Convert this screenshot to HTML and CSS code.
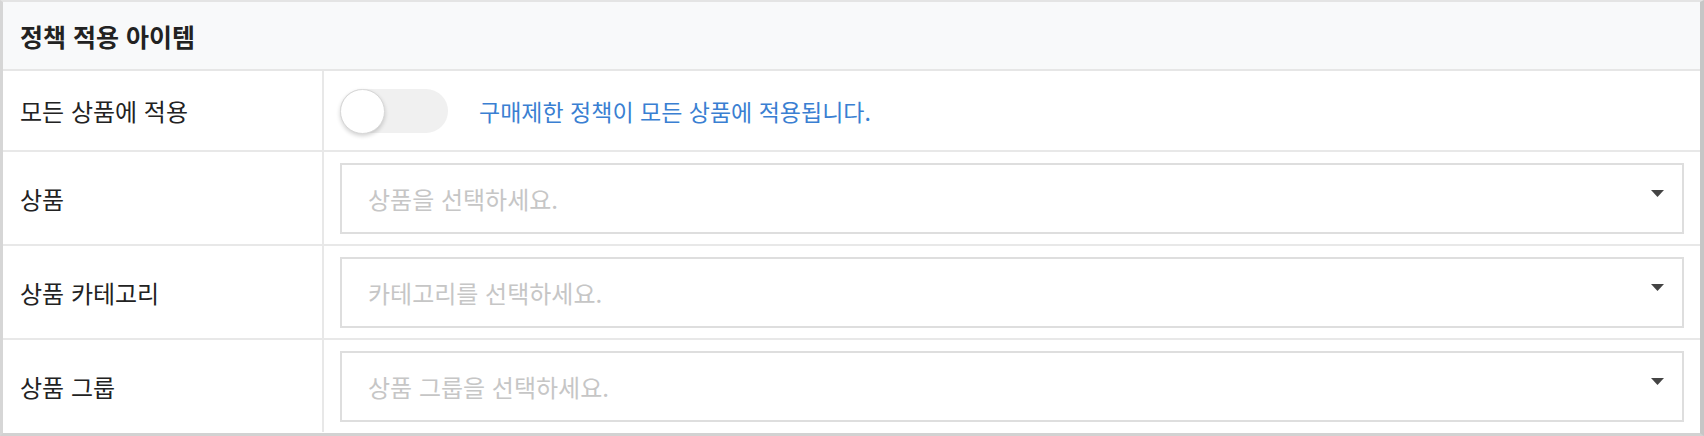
FILE: index.html
```html
<!DOCTYPE html>
<html lang="ko">
<head>
  <meta charset="UTF-8" />
  <meta name="viewport" content="width=device-width, initial-scale=1.0"/>
  <title>정책 적용 아이템</title>
  <link rel="stylesheet" href="styles.css">
</head>
<body>

  <section class="panel">
    <h2 class="panel-title">정책 적용 아이템</h2>

    <div class="row row-toggle">
      <div class="row-label">모든 상품에 적용</div>
      <div class="row-field">
        <label class="switch">
          <input type="checkbox" />
          <span class="knob"></span>
        </label>
        <span class="hint">구매제한 정책이 모든 상품에 적용됩니다.</span>
      </div>
    </div>

    <div class="row">
      <div class="row-label">상품</div>
      <div class="row-field">
        <div class="picker">
          <span class="placeholder">상품을 선택하세요.</span>
          <svg class="caret" width="13" height="7" viewBox="0 0 13 7"><polygon points="0,0 13,0 6.5,7" /></svg>
        </div>
      </div>
    </div>

    <div class="row">
      <div class="row-label">상품 카테고리</div>
      <div class="row-field">
        <div class="picker">
          <span class="placeholder">카테고리를 선택하세요.</span>
          <svg class="caret" width="13" height="7" viewBox="0 0 13 7"><polygon points="0,0 13,0 6.5,7" /></svg>
        </div>
      </div>
    </div>

    <div class="row">
      <div class="row-label">상품 그룹</div>
      <div class="row-field">
        <div class="picker">
          <span class="placeholder">상품 그룹을 선택하세요.</span>
          <svg class="caret" width="13" height="7" viewBox="0 0 13 7"><polygon points="0,0 13,0 6.5,7" /></svg>
        </div>
      </div>
    </div>
  </section>

</body>
</html>
```

FILE: styles.css
```css
* {
  box-sizing: border-box;
}

body {
  margin: 0;
  font-family: "Noto Sans CJK KR", "Noto Sans", sans-serif;
  color: #222;
  background: #fff;
}

.panel {
  width: 1704px;
  height: 436px;
  border-top: 2px solid #e4e4e4;
  border-left: 3px solid #d6d6d6;
  border-right: 4px solid #c6c6c6;
  border-bottom: 3px solid #d2d2d2;
}

.panel-title {
  margin: 0;
  height: 69px;
  padding: 0 17px;
  display: flex;
  align-items: center;
  background: #f8f9fa;
  border-bottom: 2px solid #e6e6e6;
  font-size: 25px;
  font-weight: bold;
}

.row {
  display: grid;
  grid-template-columns: 321px 1fr;
  height: 94px;
  border-bottom: 2px solid #e8e8e8;
}

.row:last-child {
  height: 92px;
  border-bottom: none;
}

.row-toggle {
  height: 81px;
}

.row-label {
  display: flex;
  align-items: center;
  padding: 0 17px;
  border-right: 2px solid #e8e8e8;
  font-size: 24px;
}

.row-field {
  display: flex;
  align-items: center;
  padding: 0 16px;
}

/* toggle */
.switch {
  position: relative;
  display: inline-block;
  width: 108px;
  height: 44px;
  border-radius: 22px;
  background: #f0f0f0;
  flex-shrink: 0;
}

.switch input {
  display: none;
}

.knob {
  position: absolute;
  left: 0;
  top: 0;
  width: 45px;
  height: 45px;
  border-radius: 50%;
  background: #fff;
  border: 1px solid #d8d8d8;
  box-shadow: 0 2px 4px rgba(0, 0, 0, 0.18);
}

.hint {
  margin-left: 31px;
  color: #3a7fd2;
  font-size: 23px;
}

/* select box */
.picker {
  flex: 1;
  height: 71px;
  display: flex;
  align-items: center;
  justify-content: space-between;
  padding: 0 18px 0 26px;
  border: 2px solid #dedede;
  background: #fff;
}

.placeholder {
  color: #c6c6c6;
  font-size: 24px;
}

.caret {
  fill: #444;
  margin-bottom: 10px;
}
```
